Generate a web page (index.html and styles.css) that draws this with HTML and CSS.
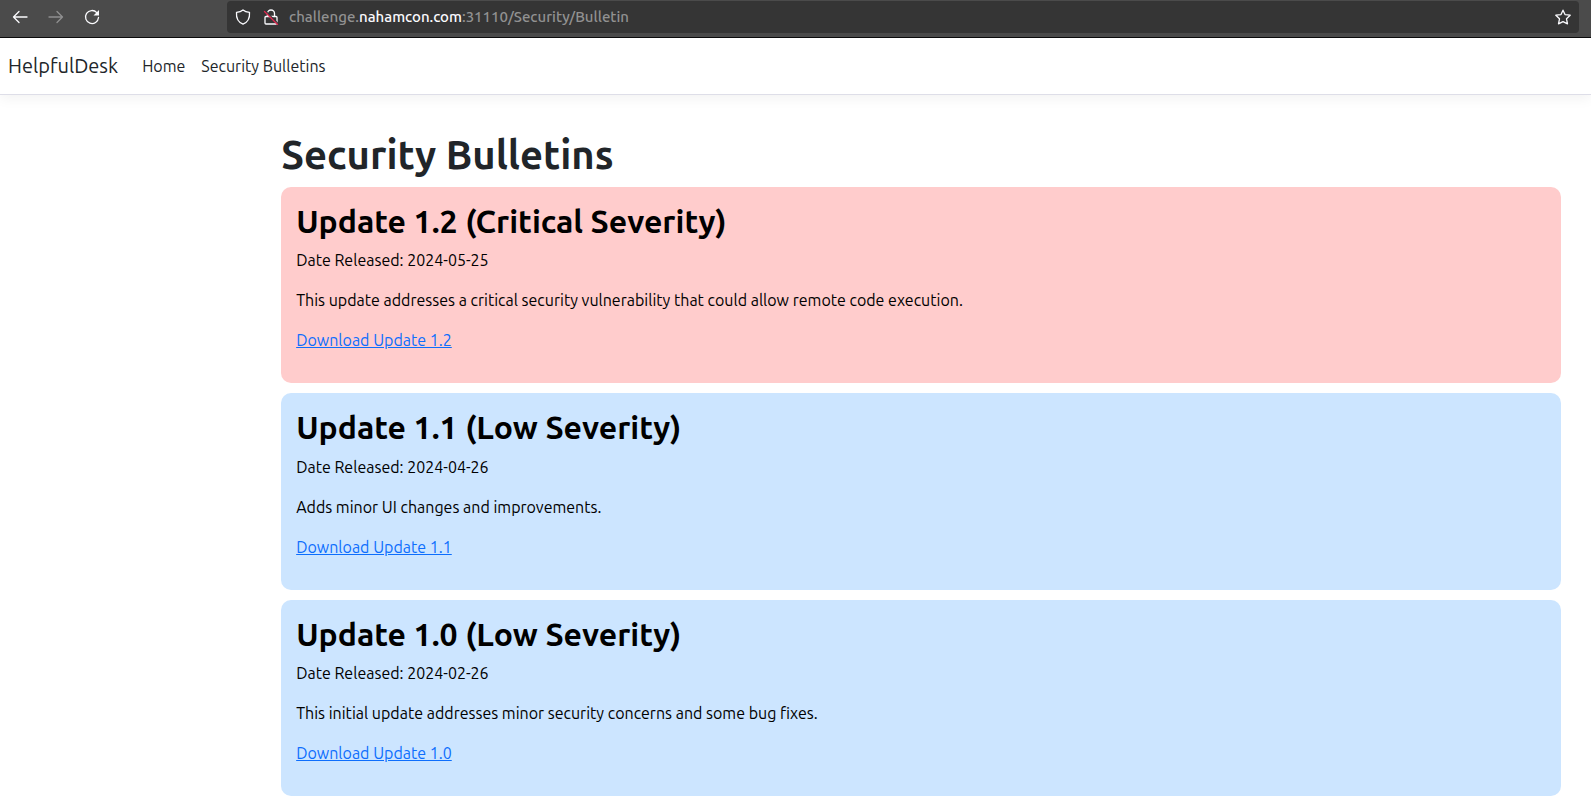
FILE: index.html
```html
<!DOCTYPE html>
<html lang="en">
<head>
<meta charset="utf-8">
<title>Security Bulletins - HelpfulDesk</title>
<meta name="viewport" content="width=device-width, initial-scale=1">
<link rel="stylesheet" href="styles.css">
</head>
<body>
<div class="toolbar">
  <div class="history">
    <button class="tool" type="button" aria-label="Back">
      <svg viewBox="0 0 16 16"><path d="M15 8H1.500M7 2.500L1.500 8L7 13.500"/></svg>
    </button>
    <button class="tool" type="button" aria-label="Forward" disabled>
      <svg viewBox="0 0 16 16"><path d="M1 8h13.500M9 2.500L14.500 8L9 13.500"/></svg>
    </button>
    <button class="tool" type="button" aria-label="Reload">
      <svg viewBox="0 0 16 16"><path d="M12.800 3.600A6.500 6.500 0 1 0 14.500 8.500"/><path class="solid" d="M15 1v5.500H9.500z"/></svg>
    </button>
  </div>
  <div class="address">
    <div class="site">
      <button class="tool" type="button" aria-label="Tracking protection">
        <svg viewBox="0 0 16 16"><path d="M8 1C6.500 2.300 3.500 3.200 1.500 3.400C1.100 8.500 3 13.200 8 15.200C13 13.200 14.900 8.500 14.500 3.400C12.500 3.200 9.500 2.300 8 1z"/></svg>
      </button>
      <button class="tool" type="button" aria-label="Connection is not secure">
        <svg viewBox="0 0 16 16"><path d="M4.500 7.500V4.500a3.500 3.500 0 0 1 7 0V7.500M3 7.500h10a1 1 0 0 1 1 1V14a1 1 0 0 1-1 1H3a1 1 0 0 1-1-1V8.500a1 1 0 0 1 1-1z"/><path class="halo" d="M2.500 2L15.500 15"/><path class="strike" d="M1.500 2.500L14.500 15.500"/></svg>
      </button>
    </div>
    <span class="url">challenge.<b>nahamcon.com</b>:31110/Security/Bulletin</span>
    <button class="tool" type="button" aria-label="Bookmark this page">
      <svg viewBox="0 0 16 16"><path d="M8 1.200L10 5.600L15.200 6.200L11.500 9.800L12.500 14.800L8 12.600L3.500 14.800L4.500 9.800L.8 6.200L6 5.600z"/></svg>
    </button>
  </div>
</div>
<header class="navbar">
  <a class="brand" href="#">HelpfulDesk</a>
  <nav class="links">
    <a href="#">Home</a>
    <a href="#">Security Bulletins</a>
  </nav>
</header>
<div class="layout">
  <main class="content">
    <h1>Security Bulletins</h1>
    <div class="bulletins">
      <article class="bulletin critical">
        <h2>Update 1.2 (Critical Severity)</h2>
        <p>Date Released: 2024-05-25</p>
        <p>This update addresses a critical security vulnerability that could allow remote code execution.</p>
        <p><a href="#">Download Update 1.2</a></p>
      </article>
      <article class="bulletin low">
        <h2>Update 1.1 (Low Severity)</h2>
        <p>Date Released: 2024-04-26</p>
        <p>Adds minor UI changes and improvements.</p>
        <p><a href="#">Download Update 1.1</a></p>
      </article>
      <article class="bulletin low">
        <h2>Update 1.0 (Low Severity)</h2>
        <p>Date Released: 2024-02-26</p>
        <p>This initial update addresses minor security concerns and some bug fixes.</p>
        <p><a href="#">Download Update 1.0</a></p>
      </article>
    </div>
  </main>
</div>
</body>
</html>
```
FILE: styles.css
```css
* { box-sizing: border-box; }

body {
  margin: 0;
  background: #fff;
  color: #212529;
  font-family: Ubuntu, "Open Sans", "Noto Sans", sans-serif;
  font-size: 16px;
  line-height: 24px;
}

.toolbar {
  display: grid;
  grid-template-columns: 227px 1fr;
  padding: 1px 12px 4px 0;
  background: #4b4b4b;
  border-bottom: 1px solid #0c0c0d;
}

.history {
  display: flex;
  align-items: center;
  gap: 20px;
  padding-left: 12px;
}

.tool {
  display: flex;
  padding: 0;
  border: 0;
  background: none;
  color: #fbfbfe;
}

.tool:disabled { color: #8f8f90; }

.tool svg {
  width: 16px;
  height: 16px;
  fill: none;
  stroke: currentColor;
  stroke-width: 1.3;
  stroke-linecap: round;
  stroke-linejoin: round;
}

.tool .solid { fill: currentColor; stroke: none; }
.tool .halo { stroke: #353535; }
.tool .strike { stroke: #e22850; }

.address {
  display: flex;
  align-items: center;
  gap: 10px;
  padding: 4px 8px;
  background: #353535;
  border-radius: 4px;
}

.site { display: flex; gap: 12px; }

.url {
  flex: 1;
  color: #919191;
  font-size: 15px;
  font-weight: 500;
}

.url b { color: #fbfbfe; font-weight: 500; }

.navbar {
  display: flex;
  align-items: center;
  gap: 16px;
  padding: 8px;
  border-bottom: 1px solid #dedee8;
  box-shadow: 0 4px 12px rgba(0, 0, 0, .05);
}

.navbar a { color: #212529; text-decoration: none; }

.brand { font-size: 20px; line-height: 30px; padding: 5px 0; }

.links { display: flex; }
.links a { padding: 8px; }

.layout {
  display: grid;
  grid-template-columns: 1fr 5fr;
  padding: 36px 0 14px;
}

.content { grid-column: 2; padding: 0 30px 0 16px; }

h1, h2, p { margin: 0; }

h1, h2 { font-weight: 600; line-height: 1.2; margin-bottom: 8px; }
h1 { font-size: 40px; }
h2 { font-size: 32px; }

.bulletins { display: grid; gap: 10px; }

.bulletin {
  padding: 15px;
  border-radius: 10px;
  color: #000;
}

.bulletin p { margin-bottom: 16px; }
.bulletin a { color: #0d6efd; }

.critical { background: #fcc; }
.low { background: #cce5ff; }
```
